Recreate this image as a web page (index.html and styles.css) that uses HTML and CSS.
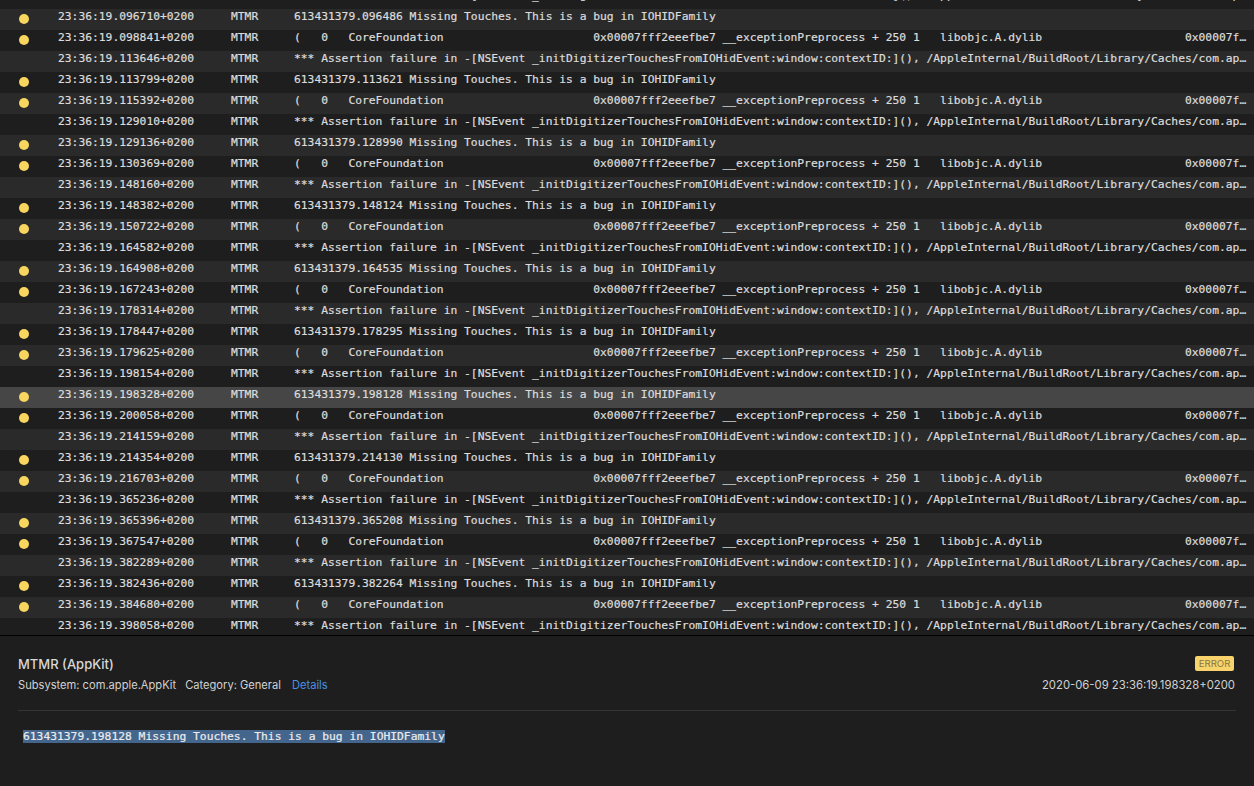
FILE: index.html
```html
<!DOCTYPE html>
<html lang="en">
<head>
<meta charset="utf-8">
<title>Console</title>
<link rel="stylesheet" href="styles.css">
</head>
<body>
<main class="console">
<section class="log">
<div class="rows">
<div class="row"><span class="lvl"></span><span>23:36:19.095210+0200</span><span>MTMR</span><span class="msg">*** Assertion failure in -[NSEvent _initDigitizerTouchesFromIOHidEvent:window:contextID:](), /AppleInternal/BuildRoot/Library/Caches/com.apple.xbs/Sources</span></div>
<div class="row"><span class="lvl"><i class="dot"></i></span><span>23:36:19.096710+0200</span><span>MTMR</span><span class="msg">613431379.096486 Missing Touches. This is a bug in IOHIDFamily</span></div>
<div class="row"><span class="lvl"><i class="dot"></i></span><span>23:36:19.098841+0200</span><span>MTMR</span><span class="msg">(   0   CoreFoundation                      0x00007fff2eeefbe7 __exceptionPreprocess + 250 1   libobjc.A.dylib                     0x00007fff58e5c5bf objc_exception_throw</span></div>
<div class="row"><span class="lvl"></span><span>23:36:19.113646+0200</span><span>MTMR</span><span class="msg">*** Assertion failure in -[NSEvent _initDigitizerTouchesFromIOHidEvent:window:contextID:](), /AppleInternal/BuildRoot/Library/Caches/com.apple.xbs/Sources</span></div>
<div class="row"><span class="lvl"><i class="dot"></i></span><span>23:36:19.113799+0200</span><span>MTMR</span><span class="msg">613431379.113621 Missing Touches. This is a bug in IOHIDFamily</span></div>
<div class="row"><span class="lvl"><i class="dot"></i></span><span>23:36:19.115392+0200</span><span>MTMR</span><span class="msg">(   0   CoreFoundation                      0x00007fff2eeefbe7 __exceptionPreprocess + 250 1   libobjc.A.dylib                     0x00007fff58e5c5bf objc_exception_throw</span></div>
<div class="row"><span class="lvl"></span><span>23:36:19.129010+0200</span><span>MTMR</span><span class="msg">*** Assertion failure in -[NSEvent _initDigitizerTouchesFromIOHidEvent:window:contextID:](), /AppleInternal/BuildRoot/Library/Caches/com.apple.xbs/Sources</span></div>
<div class="row"><span class="lvl"><i class="dot"></i></span><span>23:36:19.129136+0200</span><span>MTMR</span><span class="msg">613431379.128990 Missing Touches. This is a bug in IOHIDFamily</span></div>
<div class="row"><span class="lvl"><i class="dot"></i></span><span>23:36:19.130369+0200</span><span>MTMR</span><span class="msg">(   0   CoreFoundation                      0x00007fff2eeefbe7 __exceptionPreprocess + 250 1   libobjc.A.dylib                     0x00007fff58e5c5bf objc_exception_throw</span></div>
<div class="row"><span class="lvl"></span><span>23:36:19.148160+0200</span><span>MTMR</span><span class="msg">*** Assertion failure in -[NSEvent _initDigitizerTouchesFromIOHidEvent:window:contextID:](), /AppleInternal/BuildRoot/Library/Caches/com.apple.xbs/Sources</span></div>
<div class="row"><span class="lvl"><i class="dot"></i></span><span>23:36:19.148382+0200</span><span>MTMR</span><span class="msg">613431379.148124 Missing Touches. This is a bug in IOHIDFamily</span></div>
<div class="row"><span class="lvl"><i class="dot"></i></span><span>23:36:19.150722+0200</span><span>MTMR</span><span class="msg">(   0   CoreFoundation                      0x00007fff2eeefbe7 __exceptionPreprocess + 250 1   libobjc.A.dylib                     0x00007fff58e5c5bf objc_exception_throw</span></div>
<div class="row"><span class="lvl"></span><span>23:36:19.164582+0200</span><span>MTMR</span><span class="msg">*** Assertion failure in -[NSEvent _initDigitizerTouchesFromIOHidEvent:window:contextID:](), /AppleInternal/BuildRoot/Library/Caches/com.apple.xbs/Sources</span></div>
<div class="row"><span class="lvl"><i class="dot"></i></span><span>23:36:19.164908+0200</span><span>MTMR</span><span class="msg">613431379.164535 Missing Touches. This is a bug in IOHIDFamily</span></div>
<div class="row"><span class="lvl"><i class="dot"></i></span><span>23:36:19.167243+0200</span><span>MTMR</span><span class="msg">(   0   CoreFoundation                      0x00007fff2eeefbe7 __exceptionPreprocess + 250 1   libobjc.A.dylib                     0x00007fff58e5c5bf objc_exception_throw</span></div>
<div class="row"><span class="lvl"></span><span>23:36:19.178314+0200</span><span>MTMR</span><span class="msg">*** Assertion failure in -[NSEvent _initDigitizerTouchesFromIOHidEvent:window:contextID:](), /AppleInternal/BuildRoot/Library/Caches/com.apple.xbs/Sources</span></div>
<div class="row"><span class="lvl"><i class="dot"></i></span><span>23:36:19.178447+0200</span><span>MTMR</span><span class="msg">613431379.178295 Missing Touches. This is a bug in IOHIDFamily</span></div>
<div class="row"><span class="lvl"><i class="dot"></i></span><span>23:36:19.179625+0200</span><span>MTMR</span><span class="msg">(   0   CoreFoundation                      0x00007fff2eeefbe7 __exceptionPreprocess + 250 1   libobjc.A.dylib                     0x00007fff58e5c5bf objc_exception_throw</span></div>
<div class="row"><span class="lvl"></span><span>23:36:19.198154+0200</span><span>MTMR</span><span class="msg">*** Assertion failure in -[NSEvent _initDigitizerTouchesFromIOHidEvent:window:contextID:](), /AppleInternal/BuildRoot/Library/Caches/com.apple.xbs/Sources</span></div>
<div class="row selected"><span class="lvl"><i class="dot"></i></span><span>23:36:19.198328+0200</span><span>MTMR</span><span class="msg">613431379.198128 Missing Touches. This is a bug in IOHIDFamily</span></div>
<div class="row"><span class="lvl"><i class="dot"></i></span><span>23:36:19.200058+0200</span><span>MTMR</span><span class="msg">(   0   CoreFoundation                      0x00007fff2eeefbe7 __exceptionPreprocess + 250 1   libobjc.A.dylib                     0x00007fff58e5c5bf objc_exception_throw</span></div>
<div class="row"><span class="lvl"></span><span>23:36:19.214159+0200</span><span>MTMR</span><span class="msg">*** Assertion failure in -[NSEvent _initDigitizerTouchesFromIOHidEvent:window:contextID:](), /AppleInternal/BuildRoot/Library/Caches/com.apple.xbs/Sources</span></div>
<div class="row"><span class="lvl"><i class="dot"></i></span><span>23:36:19.214354+0200</span><span>MTMR</span><span class="msg">613431379.214130 Missing Touches. This is a bug in IOHIDFamily</span></div>
<div class="row"><span class="lvl"><i class="dot"></i></span><span>23:36:19.216703+0200</span><span>MTMR</span><span class="msg">(   0   CoreFoundation                      0x00007fff2eeefbe7 __exceptionPreprocess + 250 1   libobjc.A.dylib                     0x00007fff58e5c5bf objc_exception_throw</span></div>
<div class="row"><span class="lvl"></span><span>23:36:19.365236+0200</span><span>MTMR</span><span class="msg">*** Assertion failure in -[NSEvent _initDigitizerTouchesFromIOHidEvent:window:contextID:](), /AppleInternal/BuildRoot/Library/Caches/com.apple.xbs/Sources</span></div>
<div class="row"><span class="lvl"><i class="dot"></i></span><span>23:36:19.365396+0200</span><span>MTMR</span><span class="msg">613431379.365208 Missing Touches. This is a bug in IOHIDFamily</span></div>
<div class="row"><span class="lvl"><i class="dot"></i></span><span>23:36:19.367547+0200</span><span>MTMR</span><span class="msg">(   0   CoreFoundation                      0x00007fff2eeefbe7 __exceptionPreprocess + 250 1   libobjc.A.dylib                     0x00007fff58e5c5bf objc_exception_throw</span></div>
<div class="row"><span class="lvl"></span><span>23:36:19.382289+0200</span><span>MTMR</span><span class="msg">*** Assertion failure in -[NSEvent _initDigitizerTouchesFromIOHidEvent:window:contextID:](), /AppleInternal/BuildRoot/Library/Caches/com.apple.xbs/Sources</span></div>
<div class="row"><span class="lvl"><i class="dot"></i></span><span>23:36:19.382436+0200</span><span>MTMR</span><span class="msg">613431379.382264 Missing Touches. This is a bug in IOHIDFamily</span></div>
<div class="row"><span class="lvl"><i class="dot"></i></span><span>23:36:19.384680+0200</span><span>MTMR</span><span class="msg">(   0   CoreFoundation                      0x00007fff2eeefbe7 __exceptionPreprocess + 250 1   libobjc.A.dylib                     0x00007fff58e5c5bf objc_exception_throw</span></div>
<div class="row"><span class="lvl"></span><span>23:36:19.398058+0200</span><span>MTMR</span><span class="msg">*** Assertion failure in -[NSEvent _initDigitizerTouchesFromIOHidEvent:window:contextID:](), /AppleInternal/BuildRoot/Library/Caches/com.apple.xbs/Sources</span></div>
</div>
</section>
<section class="detail">
<header class="head">
<div class="head-left">
<h1 class="title">MTMR (AppKit)</h1>
<p class="meta"><span>Subsystem: com.apple.AppKit</span><span>Category: General</span><a class="link" href="#">Details</a></p>
</div>
<div class="head-right">
<span class="badge">ERROR</span>
<time class="stamp">2020-06-09 23:36:19.198328+0200</time>
</div>
</header>
<pre class="body"><mark class="sel">613431379.198128 Missing Touches. This is a bug in IOHIDFamily</mark></pre>
</section>
</main>
</body>
</html>
```
FILE: styles.css
```css
* { box-sizing: border-box; }
html, body { margin: 0; height: 100%; overflow: hidden; background: #1e1e1e; }
.console { display: flex; flex-direction: column; height: 786px; }

.log {
  height: 636px;
  flex: none;
  overflow: hidden;
  border-bottom: 1px solid #000;
  font: 11.3px/14px "DejaVu Sans Mono", monospace;
  color: #dcdcdc;
  -webkit-text-stroke: 0.2px #dcdcdc;
}
.rows { margin-top: -12px; }
.row {
  display: grid;
  grid-template-columns: 58px 173px 63px 954px;
  height: 21px;
  padding-top: 1px;
  white-space: pre;
}
.row:nth-child(even) { background: #2a2a2a; }
.row:nth-child(odd) { background: #1e1e1e; }
.row.selected { background: #464646; }
.lvl { display: block; }
.dot {
  display: block;
  width: 10px;
  height: 10px;
  margin: 4px 0 0 19px;
  border-radius: 50%;
  background: #f8d55f;
}
.msg { overflow: hidden; text-overflow: ellipsis; }

.detail { flex: 1; padding: 0 18px; color: #d2d2d2; font-family: Inter, sans-serif; }
.head {
  display: flex;
  justify-content: space-between;
  height: 75px;
  border-bottom: 1px solid #343434;
  padding-top: 20px;
}
.title { margin: 0; font-size: 13px; line-height: 16px; font-weight: 500; color: #d8d8d8; }
.meta { margin: 6px 0 0; display: flex; font-size: 11.14px; line-height: 14px; }
.meta span:nth-child(2) { margin-left: 9px; }
.link { margin-left: 11px; color: #4a90e2; text-decoration: none; }
.head-right { display: flex; flex-direction: column; align-items: flex-end; }
.badge {
  margin-right: 2px;
  width: 39px;
  height: 15px;
  background: #f8d36b;
  border-radius: 2px;
  color: #8a7643;
  font-size: 9.6px;
  line-height: 15px;
  text-align: center;
}
.stamp { margin: 7px 1px 0 0; font-size: 11.3px; line-height: 14px; }
.body {
  margin: 19px 0 0 5px;
  font: 11.3px/13px "DejaVu Sans Mono", monospace;
  color: #e8e8e8;
  -webkit-text-stroke: 0.2px #e8e8e8;
}
.sel { background: #44658c; color: #eeeeee; }
```
